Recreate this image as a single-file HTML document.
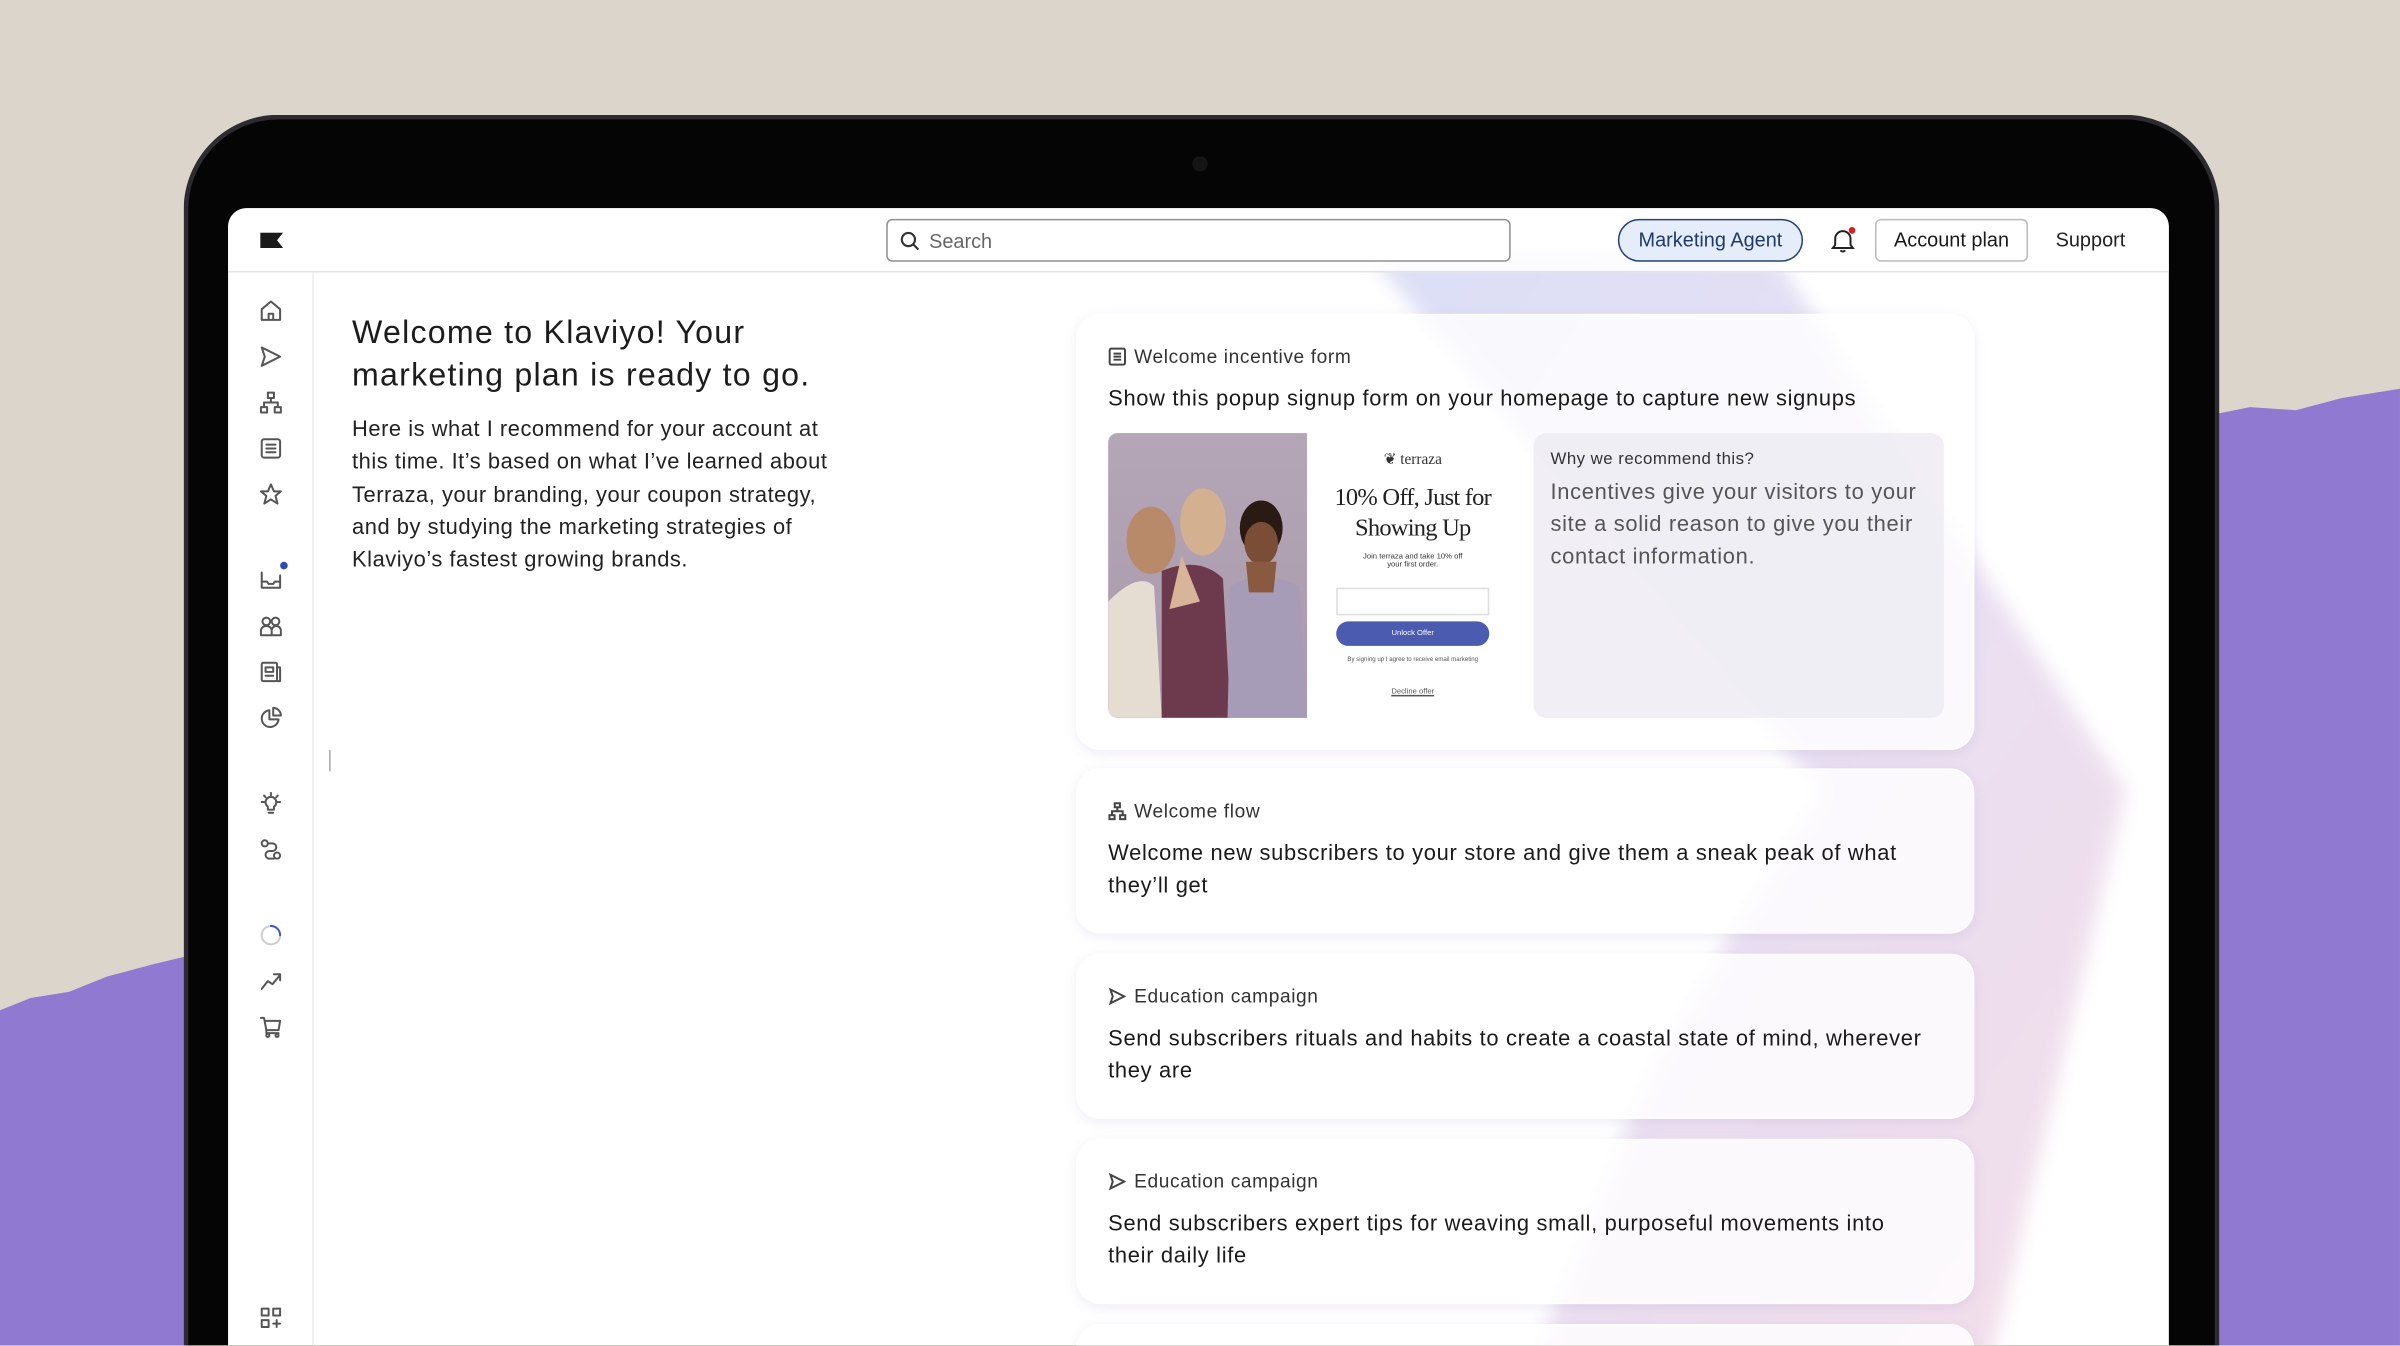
<!DOCTYPE html>
<html><head><meta charset="utf-8"><style>
*{margin:0;padding:0;box-sizing:border-box}
html,body{width:2400px;height:1346px;overflow:hidden;background:#dcd5cb}
#w{position:absolute;left:0;top:0;width:1568px;height:879px;transform:scale(1.5306);transform-origin:0 0;overflow:hidden;font-family:"Liberation Sans",sans-serif;color:#1a1a1a}
.abs{position:absolute}
.dev{left:120px;top:75px;width:1330px;height:804px;background:#050505;border-radius:62px 62px 0 0;border:3px solid #2c2c30;border-bottom:none}
.scr{left:149px;top:136px;width:1268px;height:743px;background:#fff;border-radius:12px 12px 0 0;overflow:hidden}
.hdr{left:0;top:0;width:1268px;height:42px;border-bottom:1px solid #e3e3e3;background:rgba(255,255,255,.85)}
.side{left:0;top:42px;width:56px;height:720px;border-right:1px solid #ececec}
.ico{position:absolute;left:20px;width:16px;height:16px}
.ico svg{width:16px;height:16px;fill:none;stroke:#555;stroke-width:1.3;stroke-linecap:round;stroke-linejoin:round}
.card{position:absolute;left:554px;width:587px;background:rgba(255,255,255,.82);border-radius:16px;box-shadow:0 2px 8px rgba(120,110,170,.12);border:1px solid rgba(255,255,255,.9)}
.lbl{position:absolute;left:20px;top:20px;font-size:12.5px;color:#333;display:flex;align-items:center;gap:5px;letter-spacing:.4px}
.lbl svg{width:12px;height:12px;fill:none;stroke:#444;stroke-width:1.3}
.ttl{position:absolute;left:20px;font-size:14.3px;line-height:21px;color:#1a1a1a;width:535px;letter-spacing:.45px}
</style></head><body><div id="w">
<svg class="abs" style="left:0;top:0" width="1568" height="879">
<path d="M0 660 L20 652 L45 648 L70 638 L100 630 L125 624 L125 879 L0 879Z" fill="#9079d0"/>
<path d="M1440 272 L1470 266 L1500 268 L1530 260 L1568 254 L1568 879 L1440 879Z" fill="#9079d0"/>
</svg>
<div class="abs dev"></div>
<div class="abs" style="left:779px;top:102px;width:10px;height:10px;border-radius:50%;background:#151515"></div>
<div class="abs scr">
 <svg class="abs" style="left:0;top:0" width="1268" height="760">
  <defs>
   <linearGradient id="g1" x1="0" y1="0" x2="1" y2="1"><stop offset="0" stop-color="#d8dcf6"/><stop offset=".5" stop-color="#e6dcf2"/><stop offset="1" stop-color="#f3dbe6"/></linearGradient>
   <filter id="bl"><feGaussianBlur stdDeviation="6"/></filter>
  </defs>
  <path d="M745 30 L1010 30 L1240 380 L1150 760 L850 760 L930 560 L1040 380 Z" fill="url(#g1)" filter="url(#bl)" opacity=".9"/>
 </svg>
 <div class="abs hdr">
  <svg class="abs" style="left:21px;top:16px" width="15" height="10"><path d="M0 0H15L11 5L15 10H0Z" fill="#1a1a1a"/></svg>
  <div class="abs" style="left:430px;top:7px;width:408px;height:28px;border:1px solid #8f8f8f;border-radius:4px;background:#fff">
   <svg class="abs" style="left:8px;top:7px" width="13" height="13"><circle cx="5.5" cy="5.5" r="4.3" fill="none" stroke="#333" stroke-width="1.4"/><path d="M8.6 8.6L12 12" stroke="#333" stroke-width="1.4"/></svg>
   <span class="abs" style="left:27px;top:6px;font-size:13px;color:#666">Search</span>
  </div>
  <div class="abs" style="left:908px;top:7px;width:121px;height:28px;border:1.5px solid #24427a;border-radius:14px;background:#e6edfa;font-size:13px;color:#1d3a70;text-align:center;line-height:25px">Marketing Agent</div>
  <svg class="abs" style="left:1046px;top:12px" width="18" height="18"><path d="M4 12V8a5 5 0 0 1 10 0v4l1.5 2h-13Z M7.5 15.5a1.8 1.8 0 0 0 3 0" fill="none" stroke="#222" stroke-width="1.3"/><circle cx="15" cy="2.5" r="2.2" fill="#d92020"/></svg>
  <div class="abs" style="left:1076px;top:7px;width:100px;height:28px;border:1px solid #bbb;border-radius:4px;font-size:13px;text-align:center;line-height:26px;color:#1a1a1a">Account plan</div>
  <span class="abs" style="left:1194px;top:13px;font-size:13px;color:#222">Support</span>
 </div>
 <div class="abs side">
  <div class="ico" style="top:17px"><svg viewBox="0 0 16 16"><path d="M2 7L8 2L14 7V14H2Z M6.5 14V10H9.5V14"/></svg></div>
  <div class="ico" style="top:47px"><svg viewBox="0 0 16 16"><path d="M2 2L14 8L2 14L4 8Z"/></svg></div>
  <div class="ico" style="top:77px"><svg viewBox="0 0 16 16"><rect x="6" y="1.5" width="4" height="3.5"/><rect x="1.5" y="11" width="4" height="3.5"/><rect x="10.5" y="11" width="4" height="3.5"/><path d="M8 5V8M3.5 11V8H12.5V11"/></svg></div>
  <div class="ico" style="top:107px"><svg viewBox="0 0 16 16"><rect x="2" y="2" width="12" height="12" rx="1.5"/><path d="M5 5.5H11M5 8H11M5 10.5H11"/></svg></div>
  <div class="ico" style="top:137px"><svg viewBox="0 0 16 16"><path d="M8 1.5L10 6H14.5L11 9L12.3 14L8 11.3L3.7 14L5 9L1.5 6H6Z"/></svg></div>
  <div class="ico" style="top:193px"><svg viewBox="0 0 16 16"><path d="M2 3V13H14V5M2 9H5.5L6.5 10.5H9.5L10.5 9H14"/></svg><div class="abs" style="left:14px;top:-4px;width:5px;height:5px;border-radius:50%;background:#2d4cb0"></div></div>
  <div class="ico" style="top:223px"><svg viewBox="0 0 16 16"><circle cx="5" cy="5" r="2.5"/><circle cx="11" cy="5" r="2.5"/><path d="M1.5 14V11a3.5 3 0 0 1 7 0V14ZM8.5 14V11a3 3 0 0 1 6 0V14Z"/></svg></div>
  <div class="ico" style="top:253px"><svg viewBox="0 0 16 16"><rect x="2" y="2" width="10" height="12" rx="1"/><path d="M12 5H14V14H12M4.5 5H9.5V8H4.5ZM4.5 10.5H9.5"/></svg></div>
  <div class="ico" style="top:283px"><svg viewBox="0 0 16 16"><path d="M7 3a5.5 5.5 0 1 0 6 6H7Z M9.5 1.5V6.5H14.5A5 5 0 0 0 9.5 1.5Z"/></svg></div>
  <div class="ico" style="top:339px"><svg viewBox="0 0 16 16"><path d="M6 10a3.5 3.5 0 1 1 4 0V12H6Z M6.5 14H9.5 M8 1V2.5 M2 7H3.5 M12.5 7H14 M3.5 2.8L4.5 3.8 M12.5 2.8L11.5 3.8"/></svg></div>
  <div class="ico" style="top:369px"><svg viewBox="0 0 16 16"><circle cx="4" cy="4" r="2"/><circle cx="12" cy="12" r="2"/><path d="M6 4H9a2.5 2.5 0 0 1 0 5H7a2.5 2.5 0 0 0 0 5H10"/></svg></div>
  <div class="ico" style="top:425px"><svg viewBox="0 0 16 16"><circle cx="8" cy="8" r="6" stroke="#ccc"/><path d="M8 2a6 6 0 0 1 6 6" stroke="#3c5bd0"/></svg></div>
  <div class="ico" style="top:455px"><svg viewBox="0 0 16 16"><path d="M2 13L6 8L9 10L14 4M10 3.5H14V7.5"/></svg></div>
  <div class="ico" style="top:485px"><svg viewBox="0 0 16 16"><path d="M1.5 2H3.5L5 10H13L14 4H4M5 10V12H13"/><circle cx="6" cy="13.5" r="1"/><circle cx="12" cy="13.5" r="1"/></svg></div>
  <div class="ico" style="top:675px"><svg viewBox="0 0 16 16"><rect x="2" y="2" width="4.5" height="4.5"/><rect x="9.5" y="2" width="4.5" height="4.5"/><rect x="2" y="9.5" width="4.5" height="4.5"/><path d="M11.75 9.5V14M9.5 11.75H14"/></svg></div>
 </div>
 <div class="abs" style="left:66px;top:354px;width:1px;height:14px;background:#aaa"></div>
 <div class="abs" style="left:81px;top:68px;font-size:21px;line-height:28px;color:#1c1c1c;width:320px;letter-spacing:.8px">Welcome to Klaviyo! Your marketing plan is ready to go.</div>
 <div class="abs" style="left:81px;top:135px;font-size:14.3px;line-height:21.3px;color:#222;width:322px;letter-spacing:.35px">Here is what I recommend for your account at this time. It’s based on what I’ve learned about Terraza, your branding, your coupon strategy, and by studying the marketing strategies of Klaviyo’s fastest growing brands.</div>

 <div class="card" style="top:69px;height:285px">
  <div class="lbl"><svg viewBox="0 0 12 12"><rect x="1" y="0.8" width="10" height="10.4" rx="1"/><path d="M3.5 4H8.5M3.5 6H8.5M3.5 8H8.5"/></svg>Welcome incentive form</div>
  <div class="ttl" style="top:45px">Show this popup signup form on your homepage to capture new signups</div>
  <div class="abs" style="left:20px;top:77px;width:130px;height:186px;background:linear-gradient(180deg,#b4a6b6,#a99aac);border-radius:6px 0 0 6px;overflow:hidden">
   <svg width="130" height="186"><ellipse cx="28" cy="70" rx="16" ry="22" fill="#b98a6a"/><ellipse cx="62" cy="58" rx="15" ry="22" fill="#d2b090"/><ellipse cx="100" cy="62" rx="14" ry="18" fill="#2a1a14"/><ellipse cx="100" cy="72" rx="11" ry="14" fill="#7a4e36"/>
   <path d="M0 110 Q20 90 30 100 L35 186 H0Z" fill="#e6ddd2"/><path d="M35 90 Q60 80 75 95 L80 186 H35Z" fill="#6c3a4c"/><path d="M80 100 Q100 88 125 100 L130 186 H78Z" fill="#a79cb7"/><path d="M48 80 L60 110 L40 115Z" fill="#d7b49a"/><path d="M90 84 L110 84 L108 104 L92 104Z" fill="#8a5a40"/></svg>
  </div>
  <div class="abs" style="left:150px;top:77px;width:138px;height:186px;background:#fff;border-radius:0 8px 8px 0;text-align:center;font-family:'Liberation Serif',serif">
   <div style="margin-top:12px;font-size:10px;color:#333">❦ terraza</div>
   <div style="margin-top:10px;font-size:16px;line-height:20px;color:#222;letter-spacing:-.5px">10% Off, Just for<br>Showing Up</div>
   <div style="margin-top:6px;font-size:5px;line-height:5px;color:#333;font-family:'Liberation Sans'">Join terraza and take 10% off<br>your first order.</div>
   <div style="margin:12px auto 0;width:100px;height:18px;border:1px solid #ddd"></div>
   <div style="margin:4px auto 0;width:100px;height:16px;border-radius:8px;background:#4a5bb0;color:#fff;font-size:5px;line-height:16px;font-family:'Liberation Sans'">Unlock Offer</div>
   <div style="margin-top:6px;font-size:4px;color:#555;font-family:'Liberation Sans'">By signing up I agree to receive email marketing</div>
   <div style="margin-top:16px;font-size:5px;color:#555;text-decoration:underline;font-family:'Liberation Sans'">Decline offer</div>
  </div>
  <div class="abs" style="left:298px;top:77px;width:268px;height:186px;background:rgba(236,234,242,.75);border-radius:8px">
   <div class="abs" style="left:11px;top:11px;font-size:11px;color:#333;letter-spacing:.3px">Why we recommend this?</div>
   <div class="abs" style="left:11px;top:29px;width:245px;font-size:14.3px;line-height:21px;color:#555;letter-spacing:.45px">Incentives give your visitors to your site a solid reason to give you their contact information.</div>
  </div>
 </div>
 <div class="card" style="top:366px;height:108px">
  <div class="lbl" style="top:20px"><svg viewBox="0 0 12 12"><rect x="4.3" y=".8" width="3.4" height="2.6"/><rect x=".8" y="8.6" width="3.4" height="2.6"/><rect x="7.8" y="8.6" width="3.4" height="2.6"/><path d="M6 3.4V6M2.5 8.6V6H9.5V8.6"/></svg>Welcome flow</div>
  <div class="ttl" style="top:45px">Welcome new subscribers to your store and give them a sneak peak of what they’ll get</div>
 </div>
 <div class="card" style="top:487px;height:108px">
  <div class="lbl"><svg viewBox="0 0 12 12"><path d="M1.5 1.5L10.5 6L1.5 10.5L3 6Z"/></svg>Education campaign</div>
  <div class="ttl" style="top:45px">Send subscribers rituals and habits to create a coastal state of mind, wherever they are</div>
 </div>
 <div class="card" style="top:608px;height:108px">
  <div class="lbl"><svg viewBox="0 0 12 12"><path d="M1.5 1.5L10.5 6L1.5 10.5L3 6Z"/></svg>Education campaign</div>
  <div class="ttl" style="top:45px">Send subscribers expert tips for weaving small, purposeful movements into their daily life</div>
 </div>
 <div class="card" style="top:729px;height:40px"></div>
</div>
</div></body></html>
